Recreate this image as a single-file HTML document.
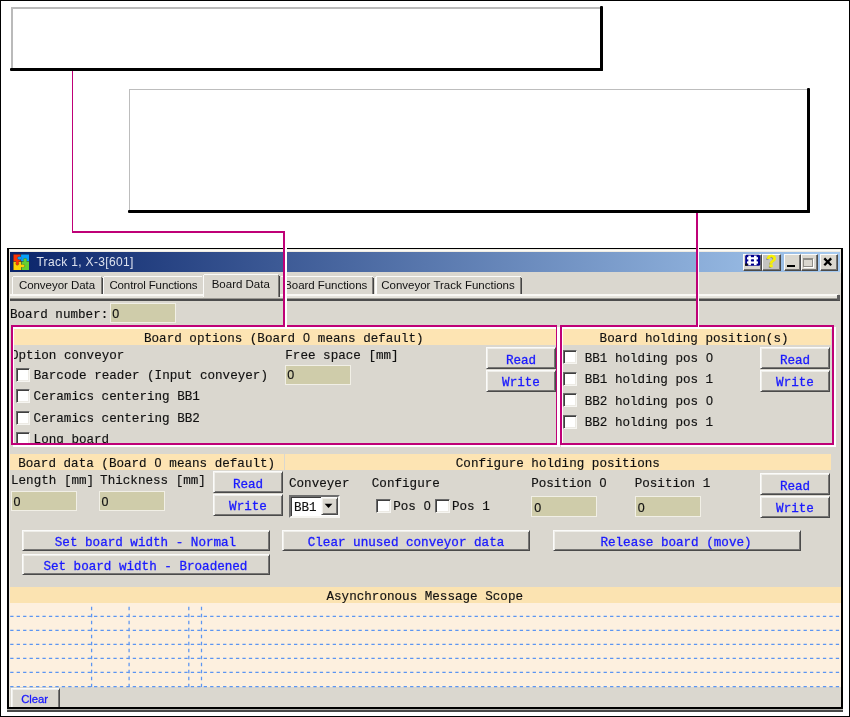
<!DOCTYPE html>
<html>
<head>
<meta charset="utf-8">
<title>Track 1, X-3[601]</title>
<style>
html,body{margin:0;padding:0;background:#fff;}
body{width:850px;height:717px;position:relative;overflow:hidden;font-family:"Liberation Mono",monospace;font-size:12.5px;color:#000;}
.a{position:absolute;}
#frame{left:0;top:0;width:848px;height:715px;border:1px solid #000;}
.t{position:absolute;white-space:pre;line-height:16px;height:16px;font-family:"Liberation Mono",monospace;font-size:12.6px;color:#111;-webkit-text-stroke:.15px #111;}
.s{position:absolute;white-space:pre;line-height:14px;height:14px;font-family:"Liberation Sans",sans-serif;font-size:11.5px;color:#111;}
.hdr{position:absolute;height:16px;background:#fde4b3;}
.inp{position:absolute;width:64px;height:18.4px;border:1px solid #f1efe6;background:#cfccaa;}
.cb{position:absolute;width:12.4px;height:11.8px;background:#fff;border-style:solid;border-width:1px;border-color:#6a6a6a #f6f5f1 #f6f5f1 #6a6a6a;box-shadow:inset 1px 1px 0 #3f3f3f,inset -1px -1px 0 #eceae4;}
.btn{position:absolute;box-sizing:border-box;background:#dad7cf;border-style:solid;border-width:1px;border-color:#fbfbfa #4a4a4a #4a4a4a #fbfbfa;box-shadow:inset 1px 1px 0 #efeee9,inset -1px -1px 0 #777674;color:#1a1aff;text-align:center;white-space:pre;font-family:"Liberation Mono",monospace;font-size:12.6px;}
.btn span{position:absolute;left:0;right:0;line-height:16px;-webkit-text-stroke:.3px #1a1aff;}
.mg{position:absolute;background:#bf0077;}
.wh{position:absolute;background:#fff;}

.tb{position:absolute;top:254.4px;height:16.3px;box-sizing:border-box;background:#dad7cf;border-style:solid;border-width:1px;border-color:#fbfbfa #4a4a4a #4a4a4a #fbfbfa;box-shadow:inset -1px -1px 0 #777674;}
.tab{position:absolute;border-style:solid;border-color:#fbfbf9 #8e8c88 transparent #fbfbf9;border-width:1px 1px 0 1.5px;box-shadow:1px 0 0 #454545;border-radius:2px 2px 0 0;}
.z{display:inline-block;width:7.56px;line-height:8px;text-align:center;font-family:"Liberation Sans",sans-serif;font-size:12.5px;}
</style>
</head>
<body>
<div id="root" style="position:absolute;left:0;top:0;width:850px;height:717px;will-change:transform;">
<div id="frame" class="a"></div>

<!-- callout box 1 -->
<div class="a" style="left:11px;top:7px;width:590px;height:2px;background:#bababa"></div>
<div class="a" style="left:11px;top:7px;width:2px;height:62px;background:#bababa"></div>
<div class="a" style="left:10px;top:68px;width:593px;height:3px;background:#000;border-radius:1px"></div>
<div class="a" style="left:600px;top:6px;width:3px;height:65px;background:#000;border-radius:1px"></div>

<!-- callout box 2 -->
<div class="a" style="left:129px;top:89px;width:679px;height:1px;background:#bdbdbd"></div>
<div class="a" style="left:129px;top:89px;width:1px;height:122px;background:#bdbdbd"></div>
<div class="a" style="left:128px;top:210px;width:682px;height:3px;background:#000;border-radius:1px"></div>
<div class="a" style="left:807px;top:88px;width:3px;height:125px;background:#000;border-radius:1px"></div>

<!-- connector lines (above window part) -->
<div class="mg" style="left:72px;top:71px;width:1px;height:162px"></div>
<div class="mg" style="left:72px;top:231px;width:213px;height:2px"></div>
<div class="mg" style="left:696px;top:213px;width:2px;height:35px"></div>

<!-- WINDOW -->
<div id="win" class="a" style="left:7.1px;top:248px;width:835.7px;height:461px;background:#000"></div>
<div class="a" style="left:7.1px;top:709px;width:835.7px;height:1px;background:#b4b2ac"></div>
<div class="a" style="left:7.1px;top:710px;width:835.7px;height:1.8px;background:#484848"></div>
<div class="a" style="left:8.8px;top:249px;width:832.4px;height:458px;background:#dad7cf"></div>
<div class="a" style="left:8.8px;top:249px;width:832.4px;height:3.2px;background:#efece3"></div>
<div class="a" style="left:8.8px;top:250px;width:832.4px;height:1px;background:#fbfaf6"></div>
<div class="a" style="left:8.8px;top:249px;width:1.4px;height:458px;background:#e9e6dd"></div>
<div class="a" style="left:840px;top:249px;width:1.2px;height:24px;background:#e9e6dd"></div>

<!-- title bar -->
<div class="a" style="left:10.2px;top:252.2px;width:829.8px;height:20.3px;background:linear-gradient(to right,#0a246a 0%,#a6caf0 100%)"></div>

<!-- title icon -->
<svg class="a" style="left:12.6px;top:253.8px" width="16.6" height="16.7" viewBox="0 0 16.6 16.7">
<rect x="-.3" y="-.3" width="17.2" height="17.3" rx=".8" fill="#0b1c55"/>
<g stroke="#1d2a3a" stroke-opacity=".55" stroke-width=".5">
<rect x=".3" y=".3" width="7.6" height="7.5" fill="#fb3404"/>
<rect x="7.9" y=".3" width="8.4" height="7" fill="#08a0fb"/>
<rect x=".3" y="7.8" width="8.2" height="8.6" fill="#fdd205"/>
<rect x="8.5" y="7.3" width="7.8" height="9.1" fill="#64cf33"/>
<ellipse cx="6.3" cy="4.1" rx="2" ry="1.6" fill="#08a0fb"/>
<ellipse cx="12.1" cy="5.7" rx="1.8" ry="1.4" fill="#64cf33"/>
<ellipse cx="4.3" cy="9.6" rx="1.5" ry="1.7" fill="#fb3404"/>
<ellipse cx="10.2" cy="11.9" rx="1.6" ry="1.5" fill="#fdd205"/>
</g>
<rect x="6.4" y="2.9" width="2" height="2.4" fill="#08a0fb"/>
<rect x="10.7" y="5.7" width="2.8" height="2.3" fill="#64cf33"/>
<rect x="3.1" y="7" width="2.4" height="2.6" fill="#fb3404"/>
<rect x="8" y="10.7" width="2.1" height="2.4" fill="#fdd205"/>
</svg>
<div class="s" style="left:36.4px;top:255.2px;font-size:12px;color:#dde2ee;letter-spacing:.33px">Track 1, X-3[601]</div>

<!-- title buttons -->
<div class="tb" style="left:743px;width:19px"><svg width="19" height="17" viewBox="0 0 19 17" style="position:absolute;left:-1px;top:-1.6px">
<rect x="2.2" y="0.8" width="15" height="11" rx="1.6" fill="#00008c"/>
<rect x="5.3" y="1.6" width="2.6" height="9.6" fill="#fff"/><rect x="11" y="1.6" width="2.6" height="9.6" fill="#fff"/>
<rect x="4" y="3.2" width="11" height="2.2" fill="#fff"/><rect x="4" y="7.4" width="11" height="2.2" fill="#fff"/>
<rect x="8.8" y="5.6" width="1.4" height="1.6" fill="#00008c"/>
<rect x="2" y="9.6" width="2.6" height="2.2" fill="#111"/>
</svg></div>
<div class="tb" style="left:762px;width:19px;background:#c3c3c1"><span class="s" style="left:0;width:17px;text-align:center;top:-2.3px;font-size:17px;line-height:17px;height:17px;font-weight:bold;color:#f8f200;-webkit-text-stroke:.5px #f8f200;text-shadow:-1px 1px 0 #8b8b8b">?</span></div>
<div class="tb" style="left:784px;width:17px"><div class="a" style="left:2px;top:9.9px;width:7.5px;height:2.2px;background:#000"></div></div>
<div class="tb" style="left:801px;width:17px"><div class="a" style="left:1.4px;top:2.7px;width:7.2px;height:5.5px;border:1px solid #8f8d88;border-top-width:2px;box-shadow:1px 1px 0 #fff"></div></div>
<div class="tb" style="left:820px;width:18px"><svg width="18" height="16" viewBox="0 0 18 16" style="position:absolute;left:-1px;top:-1px"><path d="M4.3 4.4 L11.2 11.2 M11.2 4.4 L4.3 11.2" stroke="#000" stroke-width="2.3" fill="none"/></svg></div>

<!-- tab strip -->
<div class="a" style="left:10px;top:294px;width:193px;height:2px;background:#f9f8f4"></div>
<div class="a" style="left:280px;top:294px;width:558px;height:2px;background:#f9f8f4"></div>
<div class="a" style="left:10px;top:296px;width:193px;height:2px;background:#e5e3dc"></div>
<div class="a" style="left:280px;top:296px;width:558px;height:2px;background:#e5e3dc"></div>
<div class="a" style="left:10px;top:298px;width:829.7px;height:.6px;background:#9a9892"></div>
<div class="a" style="left:10px;top:298.5px;width:829.7px;height:2px;background:#4c4c4c"></div>
<div class="a" style="left:837.3px;top:294.6px;width:2.4px;height:5px;background:#5e5e5e"></div>
<div class="a" style="left:13.2px;top:276px;width:88.1px;height:1.2px;background:#fbfbf9"></div>
<div class="a" style="left:12.2px;top:277px;width:1.3px;height:17.3px;background:#fbfbf9"></div>
<div class="a" style="left:100.6px;top:277px;width:1.1px;height:17.3px;background:#807e7a"></div>
<div class="a" style="left:101.6px;top:277.5px;width:1.2px;height:16.8px;background:#444"></div>
<div class="a" style="left:104px;top:276px;width:97.5px;height:1.2px;background:#fbfbf9"></div>
<div class="a" style="left:103px;top:277px;width:1.3px;height:17.3px;background:#fbfbf9"></div>
<div class="a" style="left:204px;top:274px;width:74.3px;height:1.2px;background:#fbfbf9"></div>
<div class="a" style="left:203px;top:275px;width:1.3px;height:21.6px;background:#fbfbf9"></div>
<div class="a" style="left:277.6px;top:275px;width:1.1px;height:21.6px;background:#807e7a"></div>
<div class="a" style="left:278.6px;top:275.5px;width:1.2px;height:21.1px;background:#444"></div>
<div class="a" style="left:281px;top:276px;width:91.8px;height:1.2px;background:#fbfbf9"></div>
<div class="a" style="left:372.1px;top:277px;width:1.1px;height:17.3px;background:#807e7a"></div>
<div class="a" style="left:373.1px;top:277.5px;width:1.2px;height:16.8px;background:#444"></div>
<div class="a" style="left:376.3px;top:276px;width:144.7px;height:1.2px;background:#fbfbf9"></div>
<div class="a" style="left:375.3px;top:277px;width:1.3px;height:17.3px;background:#fbfbf9"></div>
<div class="a" style="left:520.3px;top:277px;width:1.1px;height:17.3px;background:#807e7a"></div>
<div class="a" style="left:521.3px;top:277.5px;width:1.2px;height:16.8px;background:#444"></div>
<div class="s" style="left:18.9px;top:278.3px;letter-spacing:-.04px">Conveyor Data</div>
<div class="s" style="left:109.4px;top:278.3px;letter-spacing:-.12px">Control Functions</div>
<div class="s" style="left:211.7px;top:276.6px;">Board Data</div>
<div class="s" style="left:284.2px;top:278.3px;letter-spacing:-.05px">Board Functions</div>
<div class="s" style="left:381.2px;top:278.3px;">Conveyor Track Functions</div>

<!-- content -->
<div class="t" style="left:10px;top:306.5px;">Board number:</div>
<div class="inp" style="left:110px;top:303px"></div><div class="t" style="left:112px;top:306.7px;"><span class="z">0</span></div>
<div class="hdr" style="left:14px;top:329px;width:542px"></div>
<div class="hdr" style="left:563px;top:329px;width:268px"></div>
<div class="t" style="left:144.0px;top:330.7px;">Board options (Board <span class="z">0</span> means default)</div>
<div class="t" style="left:599.6px;top:330.7px;">Board holding position(s)</div>
<div class="t" style="left:11.0px;top:348.0px;">Option conveyor</div>
<div class="t" style="left:285.3px;top:348.0px;">Free space [mm]</div>
<div class="inp" style="left:285px;top:364.8px"></div><div class="t" style="left:286.9px;top:368px;"><span class="z">0</span></div>
<div class="cb" style="left:15.6px;top:367.8px"></div>
<div class="t" style="left:33.7px;top:367.6px;">Barcode reader (Input conveyer)</div>
<div class="cb" style="left:15.6px;top:389.3px"></div>
<div class="t" style="left:33.6px;top:389.1px;">Ceramics centering BB1</div>
<div class="cb" style="left:15.6px;top:410.8px"></div>
<div class="t" style="left:33.6px;top:410.6px;">Ceramics centering BB2</div>
<div class="cb" style="left:15.6px;top:432.3px"></div>
<div class="t" style="left:33.6px;top:432.1px;">Long board</div>
<div class="cb" style="left:562.8px;top:350.4px"></div>
<div class="t" style="left:584.7px;top:350.7px;">BB1 holding pos <span class="z">0</span></div>
<div class="cb" style="left:562.8px;top:371.9px"></div>
<div class="t" style="left:584.7px;top:372.2px;">BB1 holding pos 1</div>
<div class="cb" style="left:562.8px;top:393.4px"></div>
<div class="t" style="left:584.7px;top:393.7px;">BB2 holding pos <span class="z">0</span></div>
<div class="cb" style="left:562.8px;top:414.9px"></div>
<div class="t" style="left:584.7px;top:415.2px;">BB2 holding pos 1</div>
<div class="btn" style="left:486px;top:347px;width:70px;height:22px"><span style="top:4.8px">Read</span></div>
<div class="btn" style="left:486px;top:369.5px;width:70px;height:22px"><span style="top:4.5px">Write</span></div>
<div class="btn" style="left:760px;top:347px;width:70px;height:22px"><span style="top:4.8px">Read</span></div>
<div class="btn" style="left:760px;top:369.5px;width:70px;height:22px"><span style="top:4.5px">Write</span></div>
<div class="hdr" style="left:10px;top:454px;width:273.5px"></div>
<div class="hdr" style="left:285px;top:454px;width:546px"></div>
<div class="t" style="left:18.2px;top:455.7px;">Board data (Board <span class="z">0</span> means default)</div>
<div class="t" style="left:455.8px;top:455.7px;">Configure holding positions</div>
<div class="t" style="left:11.0px;top:473.0px;">Length [mm]</div>
<div class="t" style="left:100.1px;top:473.0px;">Thickness [mm]</div>
<div class="inp" style="left:11.2px;top:491px"></div><div class="t" style="left:13.2px;top:494.8px;"><span class="z">0</span></div>
<div class="inp" style="left:99.3px;top:491px"></div><div class="t" style="left:101.3px;top:494.8px;"><span class="z">0</span></div>
<div class="btn" style="left:213px;top:471px;width:70px;height:22px"><span style="top:5.0px">Read</span></div>
<div class="btn" style="left:213px;top:493.7px;width:70px;height:22px"><span style="top:4.5px">Write</span></div>
<div class="t" style="left:289.0px;top:476.0px;">Conveyer</div>
<div class="t" style="left:371.8px;top:476.0px;">Configure</div>
<div class="t" style="left:531.2px;top:476px;">Position <span class="z">0</span></div>
<div class="t" style="left:634.7px;top:476.0px;">Position 1</div>
<div class="a" style="left:289px;top:495.2px;width:46.5px;height:18.5px;background:#fff;border-style:solid;border-width:2px;border-color:#6e6e6e #f6f5f1 #f6f5f1 #6e6e6e;box-shadow:inset 1px 1px 0 #3c3c3c"></div>
<div class="btn" style="left:321px;top:497.2px;width:16.8px;height:18.3px"><svg width="15" height="16" viewBox="0 0 15 16" style="position:absolute;left:0;top:0"><path d="M2.6 5.7 L10.4 5.7 L6.5 10 Z" fill="#000"/></svg></div>
<div class="t" style="left:294.0px;top:500.0px;">BB1</div>
<div class="cb" style="left:376.2px;top:499.2px"></div>
<div class="t" style="left:393.2px;top:498.7px;">Pos <span class="z">0</span></div>
<div class="cb" style="left:435.2px;top:499.2px"></div>
<div class="t" style="left:452.0px;top:498.7px;">Pos 1</div>
<div class="inp" style="left:531.3px;top:496.2px"></div><div class="t" style="left:534px;top:500.5px;"><span class="z">0</span></div>
<div class="inp" style="left:634.8px;top:496.2px"></div><div class="t" style="left:637.5px;top:500.5px;"><span class="z">0</span></div>
<div class="btn" style="left:760px;top:473.3px;width:70px;height:22px"><span style="top:5.0px">Read</span></div>
<div class="btn" style="left:760px;top:495.8px;width:70px;height:22px"><span style="top:4.5px">Write</span></div>
<div class="btn" style="left:22px;top:529.7px;width:248px;height:21px"><span style="top:4.3px;right:1px">Set board width - Normal</span></div>
<div class="btn" style="left:22px;top:553.5px;width:248px;height:21px"><span style="top:4.4px;right:1.2px">Set board width - Broadened</span></div>
<div class="btn" style="left:282px;top:529.7px;width:248px;height:21px"><span style="top:4.3px">Clear unused conveyor data</span></div>
<div class="btn" style="left:553px;top:529.7px;width:248px;height:21px"><span style="top:4.3px;right:2px">Release board (move)</span></div>
<div class="a" style="left:10px;top:587px;width:831px;height:15.7px;background:#fbe3b1"></div>
<div class="a" style="left:10px;top:602.7px;width:831px;height:84.6px;background:#fdf0df"></div>
<div class="t" style="left:326.5px;top:588.5px;">Asynchronous Message Scope</div>
<svg class="a" style="left:0;top:600px" width="850" height="90" viewBox="0 600 850 90">
<g stroke="#5b95f2" stroke-width="1.25" fill="none">
<line x1="10.2" y1="616.3" x2="841" y2="616.3" stroke-dasharray="3.3 3.15"/>
<line x1="10.2" y1="630.4" x2="841" y2="630.4" stroke-dasharray="3.3 3.15"/>
<line x1="10.2" y1="644.4" x2="841" y2="644.4" stroke-dasharray="3.3 3.15"/>
<line x1="10.2" y1="658.4" x2="841" y2="658.4" stroke-dasharray="3.3 3.15"/>
<line x1="10.2" y1="672.4" x2="841" y2="672.4" stroke-dasharray="3.3 3.15"/>
<line x1="10.2" y1="686.5" x2="841" y2="686.5" stroke-dasharray="3.3 3.15"/>
<line x1="91.6" y1="606.7" x2="91.6" y2="687" stroke-dasharray="3.6 3.4"/>
<line x1="129.1" y1="606.7" x2="129.1" y2="687" stroke-dasharray="3.6 3.4"/>
<line x1="188.8" y1="606.7" x2="188.8" y2="687" stroke-dasharray="3.6 3.4"/>
<line x1="201.5" y1="606.7" x2="201.5" y2="687" stroke-dasharray="3.6 3.4"/>
</g></svg>
<div class="btn" style="left:10.5px;top:688px;width:49.3px;height:19px;border-bottom:0;box-shadow:inset 1px 1px 0 #efeee9,inset -1px 0 0 #777674"><span class="s" style="position:absolute;left:0;right:1px;top:2.1px;font-size:11.3px;color:#1a1aff;text-align:center;height:auto">Clear</span></div>

<div class="a" style="left:10.2px;top:445px;width:550px;height:9px;background:#dad7cf"></div>
<!-- magenta highlight boxes -->
<div class="wh" style="left:13px;top:327px;width:544px;height:2px"></div>
<div class="wh" style="left:13px;top:327px;width:1px;height:118px"></div>
<div class="wh" style="left:557px;top:327px;width:3px;height:120px"></div>
<div class="wh" style="left:13px;top:445px;width:547px;height:2px"></div>
<div class="wh" style="left:562px;top:327px;width:270px;height:2px"></div>
<div class="wh" style="left:562px;top:327px;width:1.3px;height:118px"></div>
<div class="wh" style="left:834px;top:327px;width:2px;height:120px"></div>
<div class="wh" style="left:561px;top:445px;width:275px;height:2px"></div>
<div class="mg" style="left:11px;top:325px;width:546px;height:2px"></div>
<div class="mg" style="left:11px;top:325px;width:2px;height:120px"></div>
<div class="mg" style="left:556px;top:325px;width:1px;height:120px"></div>
<div class="mg" style="left:11px;top:443px;width:546px;height:2px"></div>
<div class="mg" style="left:560px;top:325px;width:274px;height:2px"></div>
<div class="mg" style="left:560px;top:325px;width:2px;height:120px"></div>
<div class="mg" style="left:832px;top:325px;width:2px;height:120px"></div>
<div class="mg" style="left:560px;top:443px;width:274px;height:2px"></div>
<div class="mg" style="left:283px;top:231px;width:2px;height:95px"></div>
<div class="mg" style="left:696px;top:213px;width:2px;height:113px"></div>
<div class="wh" style="left:285px;top:233px;width:2px;height:96px"></div>
<div class="wh" style="left:698px;top:248px;width:1px;height:81px"></div>

</div>
</body>
</html>
